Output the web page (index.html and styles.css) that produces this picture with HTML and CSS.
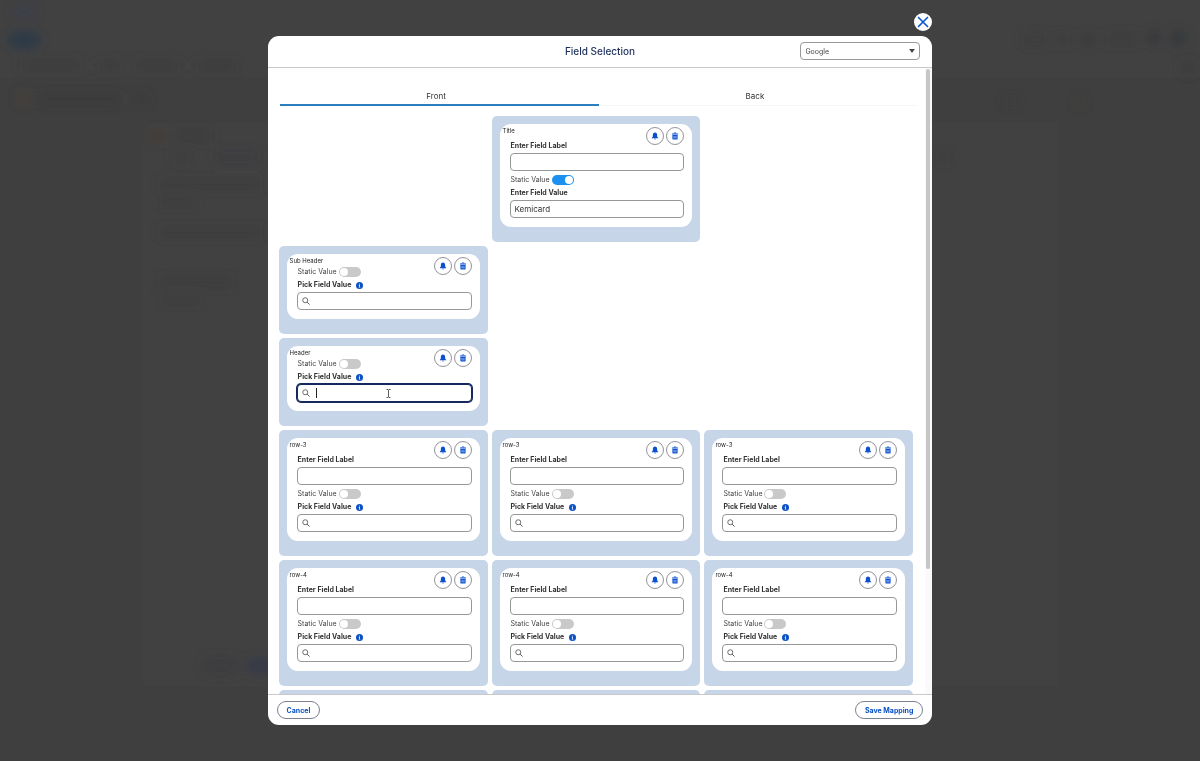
FILE: index.html
```html
<!DOCTYPE html>
<html lang="en">
<head>
    <meta charset="utf-8">
    <title>Field Selection</title>
    <link rel="stylesheet" href="styles.css">
</head>
<body>
    <svg width="0" height="0" style="display: none">
        <symbol id="i-bell" viewBox="0 0 16 16">
            <path d="M8 1.2c-2.6 0-4.3 2-4.3 4.5v2.6c0 .9-.5 1.500-1.100 2-.7.500-1 1-1 1.500 0 .4.300.7.7.7h11.400c.4 0 .7-.3.7-.7 0-.5-.3-1-1-1.500-.6-.5-1.100-1.100-1.100-2V5.700c0-2.500-1.700-4.500-4.300-4.500zM6 13.400c.3.9 1 1.500 2 1.500s1.700-.6 2-1.500z"/>
        </symbol>
        <symbol id="i-trash" viewBox="0 0 16 16">
            <path fill-rule="evenodd" d="M5.500 2.800V2c0-.7.500-1.200 1.200-1.200h2.600c.7 0 1.200.5 1.200 1.200v.8h3c.4 0 .7.300.7.700v.8c0 .4-.3.700-.7.700h-11c-.4 0-.7-.3-.7-.7v-.8c0-.4.300-.7.700-.7zm1.300 0h2.400V2H6.800zM2.800 6.200h10.400v7.200c0 1-.8 1.800-1.800 1.800H4.600c-1 0-1.800-.8-1.800-1.800zm2.700 2v4.800h1.200V8.200zm3.800 0v4.800h1.200V8.200z"/>
        </symbol>
        <symbol id="i-search" viewBox="0 0 16 16">
            <circle cx="6.500" cy="6.500" r="5" fill="none" stroke="currentColor" stroke-width="1.700"/>
            <path d="M10.200 10.200l4.800 4.800" fill="none" stroke="currentColor" stroke-width="2"/>
        </symbol>
        <symbol id="i-info" viewBox="0 0 16 16">
            <circle cx="8" cy="8" r="8"/>
            <path fill="#fff" d="M8 3.200a1.300 1.300 0 1 1 0 2.600 1.300 1.300 0 0 1 0-2.600zM6.300 7h2.600v4.200h1v1.300H6.200v-1.300h1V8.300h-.9z"/>
        </symbol>
    </svg>

    <!-- dimmed page behind the dialog -->
    <svg class="page-behind" viewBox="0 0 1200 761" preserveAspectRatio="xMidYMin slice" aria-hidden="true">
        <defs><filter id="soft" x="-50%" y="-50%" width="200%" height="200%"><feGaussianBlur stdDeviation="4"/></filter></defs>
        <rect width="1200" height="78" fill="#414141"/>
        <rect x="143" y="122" width="915" height="564" rx="4" fill="#414141"/>
        <g filter="url(#soft)">
            <ellipse cx="24" cy="12" rx="14" ry="7" fill="#3d3f46"/>
            <ellipse cx="24" cy="40" rx="17" ry="10" fill="#2f3b46"/>
            <rect x="20" y="61" width="62" height="9" fill="#3d3d3d"/>
            <rect x="98" y="61" width="24" height="9" fill="#3d3d3d"/>
            <rect x="134" y="61" width="46" height="9" fill="#3d3d3d"/>
            <rect x="196" y="61" width="42" height="9" fill="#3d3d3d"/>
            <circle cx="24" cy="98" r="7" fill="#45403a"/>
            <rect x="40" y="94" width="78" height="10" fill="#3b3b3b"/>
            <rect x="134" y="94" width="14" height="9" fill="#3b3b3b"/>
            <circle cx="158" cy="136" r="7" fill="#443c34"/>
            <rect x="172" y="131" width="40" height="10" fill="#3d3d3d"/>
            <rect x="172" y="152" width="18" height="10" fill="#3d3d3d"/>
            <rect x="216" y="152" width="44" height="12" fill="#3d3d3f"/>
            <rect x="158" y="180" width="104" height="9" fill="#3e3e3e"/>
            <rect x="160" y="197" width="36" height="8" fill="#3e3e3e"/>
            <rect x="158" y="228" width="104" height="9" fill="#3e3e3e"/>
            <rect x="158" y="278" width="76" height="9" fill="#3e3e3e"/>
            <rect x="160" y="295" width="42" height="8" fill="#3e3e3e"/>
            <rect x="1022" y="34" width="24" height="11" fill="#3c3c3c"/>
            <rect x="1054" y="34" width="16" height="10" fill="#3c3c3c"/>
            <circle cx="1088" cy="39" r="7" fill="#3b3b3b"/>
            <rect x="1106" y="34" width="34" height="10" fill="#3c3c3c"/>
            <circle cx="1154" cy="37" r="7" fill="#38393c"/>
            <circle cx="1178" cy="38" r="9" fill="#393a3e"/>
            <circle cx="1188" cy="68" r="7" fill="#3c3c3c"/>
            <rect x="1004" y="98" width="12" height="8" fill="#3c3c3c"/>
            <circle cx="1080" cy="102" r="5" fill="#41403b"/>
            <rect x="936" y="152" width="14" height="10" fill="#3c3c3c"/>
            <rect x="202" y="657" width="38" height="18" rx="9" fill="#3e3e3f"/>
            <rect x="246" y="657" width="40" height="18" rx="9" fill="#383a46"/>
        </g>
    </svg>

    <div class="overlay">
        <div class="dialog-wrap">
            <button class="close" type="button" aria-label="Close">
                <svg viewBox="0 0 16 16"><path d="M2 2l12 12M14 2L2 14" fill="none" stroke="currentColor" stroke-width="2.200" stroke-linecap="round"/></svg>
            </button>
            <section class="modal" role="dialog" aria-labelledby="modal-title">
                <header class="modal-header">
                    <h2 id="modal-title">Field Selection</h2>
                    <div class="select-wrap">
                        <select aria-label="Wallet">
                            <option>Google</option>
                            <option>Apple</option>
                        </select>
                        <svg viewBox="0 0 10 7"><path d="M0 0h10L5 7z"/></svg>
                    </div>
                </header>

                <div class="modal-body">
                    <div class="scroll-area">
                        <nav class="tabs">
                            <a class="active" href="#front">Front</a>
                            <a href="#back">Back</a>
                        </nav>
                        <div class="grid" id="front"></div>
                    </div>
                    <div class="scroll-track"><div class="scroll-thumb"></div></div>
                </div>

                <footer class="modal-footer">
                    <button class="btn" type="button">Cancel</button>
                    <button class="btn" type="button">Save Mapping</button>
                </footer>
            </section>
        </div>
    </div>

    <script src="script.js"></script>
</body>
</html>
```
FILE: styles.css
```css
* {
    box-sizing: border-box;
}

body {
    margin: 0;
    min-height: 100vh;
    background: #3f3f3f;
    font-family: Inter, "Liberation Sans", sans-serif;
    font-size: 7px;
    line-height: 12px;
    color: #444;
}

button,
input,
select {
    font-family: inherit;
    color: inherit;
}

.page-behind {
    position: fixed;
    top: 0;
    left: 0;
    width: 100%;
    height: 100%;
}

.overlay {
    position: relative;
    display: flex;
    justify-content: center;
    height: 100vh;
    padding: 13px 0 36px;
}

.dialog-wrap {
    display: flex;
    flex-direction: column;
    gap: 5px;
    width: 55.4%;
    min-width: 480px;
}

.close {
    align-self: flex-end;
    display: flex;
    align-items: center;
    justify-content: center;
    width: 18px;
    height: 18px;
    padding: 0;
    border: none;
    border-radius: 50%;
    background: #fff;
    color: #0b55d0;
}

.close svg {
    width: 12px;
    height: 12px;
}

.modal {
    flex: 1;
    min-height: 0;
    display: flex;
    flex-direction: column;
    border-radius: 11px;
    background: #fff;
    overflow: hidden;
}

/* header */
.modal-header {
    display: grid;
    grid-template-columns: 1fr auto 1fr;
    align-items: center;
    height: 32px;
    padding: 0 12px 1px;
    border-bottom: 1px solid #c9c9c9;
}

.modal-header h2 {
    grid-column: 2;
    margin: 0;
    font-size: 10px;
    font-weight: 500;
    color: #1c2f5c;
}

.select-wrap {
    position: relative;
    justify-self: end;
    width: 120px;
}

.select-wrap select {
    display: block;
    appearance: none;
    width: 100%;
    height: 18px;
    padding: 0 4px;
    border: 1px solid #999;
    border-radius: 4px;
    background: #fff;
    font-size: 7px;
}

.select-wrap svg {
    position: absolute;
    top: 7px;
    right: 5px;
    width: 6px;
    height: 4px;
    fill: #444;
    pointer-events: none;
}

/* body */
.modal-body {
    flex: 1;
    min-height: 0;
    display: flex;
}

.scroll-area {
    flex: 1;
    padding: 20px 12px 34px 11px;
    overflow-y: auto;
    scrollbar-width: none;
}

.scroll-track {
    width: 7px;
    padding: 1px 2px 0 1px;
    background: #fafafa;
}

.scroll-thumb {
    height: 80%;
    border-radius: 2px;
    background: #c6c6c6;
}

.tabs {
    display: flex;
    margin: 0 -4px 10px 1px;
}

.tabs a {
    flex: 1;
    height: 18px;
    padding-right: 6px;
    border-bottom: 1px solid #f6f6f6;
    font-size: 8px;
    line-height: 16px;
    text-align: center;
    text-decoration: none;
    color: #333;
}

.tabs a.active {
    border-bottom: 2px solid #2b7fbf;
}

.grid {
    display: grid;
    grid-template-columns: repeat(3, 1fr);
    gap: 4px;
}

.card {
    padding: 8px 8px 15px;
    border-radius: 5px;
    background: #c6d6e8;
}

.col-1 {
    grid-column: 1;
}

.col-2 {
    grid-column: 2;
}

.card-inner {
    position: relative;
    padding: 0 8px 9px 10px;
    border-radius: 11px;
    background: #fff;
}

.tag {
    height: 12px;
    margin-left: -7px;
    font-size: 6px;
    line-height: 13px;
    color: #222;
}

.actions {
    position: absolute;
    top: 3px;
    right: 8px;
    display: flex;
    gap: 2px;
}

.actions button {
    display: flex;
    align-items: center;
    justify-content: center;
    width: 18px;
    height: 18px;
    padding: 0;
    border: 1px solid #93939a;
    border-radius: 50%;
    background: #fff;
    color: #0b50d0;
}

.actions svg {
    width: 8px;
    height: 8px;
    fill: currentColor;
}

.label-block {
    padding: 3px 0;
}

.field-label {
    display: flex;
    align-items: center;
    gap: 5px;
    height: 14px;
    padding-left: 1px;
    font-weight: 700;
    color: #333;
}

.field-label svg {
    width: 7px;
    height: 7px;
    fill: #0b50c4;
}

.text-box {
    display: flex;
    align-items: center;
    position: relative;
    height: 18px;
    padding: 0 4px;
    border: 1px solid #979797;
    border-radius: 4px;
    background: #fff;
}

.text-box input {
    flex: 1;
    min-width: 0;
    height: 16px;
    padding: 0;
    border: none;
    outline: none;
    background: none;
    font-size: 8px;
    color: #333;
}

.text-box > svg {
    width: 8px;
    height: 8px;
    margin-right: 6px;
    color: #555;
}

.text-box.focused {
    border-color: #16295c;
    box-shadow: 0 0 0 1px #16295c;
}

.caret {
    width: 1px;
    height: 10px;
    background: #222;
}

.text-box .pointer {
    position: absolute;
    left: 51%;
    width: 5px;
    height: 9px;
    margin: 0;
}

.static-row {
    display: flex;
    align-items: center;
    gap: 2px;
    height: 12px;
    padding-left: 1px;
}

.switch {
    appearance: none;
    width: 22px;
    height: 10px;
    margin: 0;
    padding: 1px;
    border-radius: 5px;
    background: #c9c9c9;
}

.switch::before {
    content: "";
    display: block;
    width: 8px;
    height: 8px;
    border-radius: 50%;
    background: #fff;
}

.switch:checked {
    background: #1b90f0;
}

.switch:checked::before {
    margin-left: auto;
}

/* footer */
.modal-footer {
    display: flex;
    align-items: center;
    justify-content: space-between;
    height: 31px;
    padding: 0 9px;
    border-top: 1px solid #c9c9c9;
}

.btn {
    height: 18px;
    padding: 0 9px;
    border: 1px solid #7c8190;
    border-radius: 9px;
    background: #fff;
    font-size: 7px;
    font-weight: 700;
    color: #0b50c4;
}
```
FILE: script.js
```js
const cards = [
    { tag: 'Title', col: 2, label: true, isStatic: true, value: 'Kemicard' },
    { tag: 'Sub Header', col: 1 },
    { tag: 'Header', col: 1, focused: true }
];

['row-3', 'row-4', 'row-5'].forEach((tag) => {
    for (let i = 0; i < 3; i++) {
        cards.push({ tag: tag, label: true, col: i === 0 ? 1 : null });
    }
});

function icon(name) {
    return `<svg viewBox="0 0 16 16" aria-hidden="true"><use href="#i-${name}"></use></svg>`;
}

function renderCard(card, i) {
    const labelBlock = card.label ? `
        <div class="label-block">
            <label class="field-label" for="label-${i}">Enter Field Label</label>
            <div class="text-box"><input type="text" id="label-${i}"></div>
        </div>` : '';

    const caret = card.focused ? '<span class="caret"></span>' : '';
    const pointer = card.focused ? '<svg class="pointer" viewBox="0 0 5 9"><path d="M.5.500h1.500l.5.500.5-.500h1.500M2.500 1v7M.5 8.500h1.500l.5-.500.5.500h1.500" fill="none" stroke="#333" stroke-width=".8"/></svg>' : '';

    return `
    <div class="card ${card.col ? 'col-' + card.col : ''}">
        <div class="card-inner">
            <div class="tag">${card.tag}</div>
            <div class="actions">
                <button type="button" aria-label="Notification">${icon('bell')}</button>
                <button type="button" aria-label="Delete">${icon('trash')}</button>
            </div>
            ${labelBlock}
            <div class="static-row">
                <label for="static-${i}">Static Value</label>
                <input class="switch" type="checkbox" id="static-${i}" ${card.isStatic ? 'checked' : ''}>
            </div>
            <label class="field-label" for="value-${i}">${card.isStatic ? 'Enter Field Value' : 'Pick Field Value ' + icon('info')}</label>
            <div class="text-box ${card.focused ? 'focused' : ''}">
                ${card.isStatic ? '' : icon('search')}${caret}
                <input type="text" id="value-${i}" value="${card.value || ''}">
                ${pointer}
            </div>
        </div>
    </div>`;
}

document.getElementById('front').innerHTML = cards.map(renderCard).join('');
```
